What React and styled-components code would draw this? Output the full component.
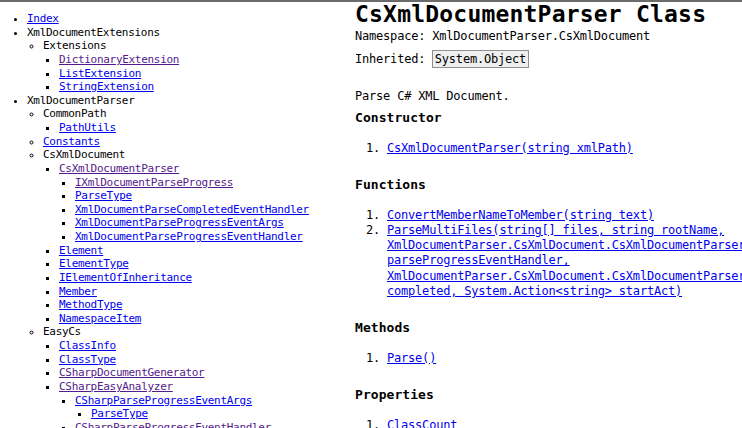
/* React */
import React from 'react';

/* Styles */
import styled, { createGlobalStyle } from 'styled-components';

/* Global */
const GlobalStyle = createGlobalStyle`
    html, body {
        margin: 0;
        padding: 0;
        overflow: hidden;
        background: #fff;
    }

    body {
        font-family: "DejaVu Sans Mono", "Liberation Mono", monospace;
        color: #000;
    }
`;

/* Data */
const tree = [
    { label: 'Index', link: true },
    {
        label: 'XmlDocumentExtensions',
        children: [
            {
                label: 'Extensions',
                children: [
                    { label: 'DictionaryExtension', link: true, visited: true },
                    { label: 'ListExtension', link: true },
                    { label: 'StringExtension', link: true },
                ],
            },
        ],
    },
    {
        label: 'XmlDocumentParser',
        children: [
            { label: 'CommonPath', children: [{ label: 'PathUtils', link: true }] },
            { label: 'Constants', link: true },
            {
                label: 'CsXmlDocument',
                children: [
                    {
                        label: 'CsXmlDocumentParser',
                        link: true,
                        visited: true,
                        children: [
                            { label: 'IXmlDocumentParseProgress', link: true, visited: true },
                            { label: 'ParseType', link: true },
                            { label: 'XmlDocumentParseCompletedEventHandler', link: true },
                            { label: 'XmlDocumentParseProgressEventArgs', link: true },
                            { label: 'XmlDocumentParseProgressEventHandler', link: true },
                        ],
                    },
                    { label: 'Element', link: true },
                    { label: 'ElementType', link: true },
                    { label: 'IElementOfInheritance', link: true },
                    { label: 'Member', link: true },
                    { label: 'MethodType', link: true },
                    { label: 'NamespaceItem', link: true },
                ],
            },
            {
                label: 'EasyCs',
                children: [
                    { label: 'ClassInfo', link: true },
                    { label: 'ClassType', link: true },
                    { label: 'CSharpDocumentGenerator', link: true, visited: true },
                    {
                        label: 'CSharpEasyAnalyzer',
                        link: true,
                        visited: true,
                        children: [
                            {
                                label: 'CSharpParseProgressEventArgs',
                                link: true,
                                children: [{ label: 'ParseType', link: true }],
                            },
                            { label: 'CSharpParseProgressEventHandler', link: true, visited: true },
                        ],
                    },
                ],
            },
        ],
    },
];

const sections = [
    {
        title: 'Constructor',
        items: ['CsXmlDocumentParser(string xmlPath)'],
    },
    {
        title: 'Functions',
        items: [
            'ConvertMemberNameToMember(string text)',
            'ParseMultiFiles(string[] files, string rootName, XmlDocumentParser.CsXmlDocument.CsXmlDocumentParser.ParseProgressEventHandler parseProgressEventHandler, XmlDocumentParser.CsXmlDocument.CsXmlDocumentParser.ParseCompletedEventHandler completed, System.Action<string> startAct)',
        ],
    },
    {
        title: 'Methods',
        items: ['Parse()'],
    },
    {
        title: 'Properties',
        items: ['ClassCount', 'ClassInfos', 'ProgressCount'],
    },
];

const bulletTypes = ['disc', 'circle', 'square'];

/* Styled Components */
const Page = styled.div`
    display: grid;
    grid-template-columns: 355px 1fr;
    height: 428px;
    border-top: 2px solid #6b6b6b;
    box-sizing: border-box;
`;

const Sidebar = styled.nav`
    padding: 10px 0 0 11px;
`;

const TreeList = styled.ul`
    margin: 0;
    padding-left: 16px;
    list-style-type: ${props => bulletTypes[Math.min(props.level, 2)]};
    font-size: 11px;
    line-height: 13.63px;
    letter-spacing: -0.3px;
`;

const TreeItem = styled.li`
    white-space: nowrap;
`;

const Link = styled.a`
    color: ${props => props.visited ? '#551a8b' : '#0000ee'};
    text-decoration: underline;
`;

const Main = styled.main`
    padding-right: 10px;
    min-width: 0;
`;

const Title = styled.h1`
    margin: 0;
    font-size: 23px;
    line-height: 24px;
    font-weight: bold;
    letter-spacing: 0.2px;
    white-space: nowrap;
`;

const InfoLine = styled.div`
    display: flex;
    align-items: center;
    height: ${props => props.tall ? '18px' : '15px'};
    margin-top: ${props => props.gap}px;
    font-size: 12px;
    line-height: 15px;
    letter-spacing: -0.2px;
    white-space: pre;
`;

const TypeBox = styled.span`
    display: inline-block;
    padding: 0 1.5px;
    border: 1px solid #8f8f8f;
    background: #efefef;
    line-height: 16px;
`;

const Description = styled.p`
    margin: 20.5px 0 0;
    font-size: 12px;
    line-height: 15.3px;
    letter-spacing: -0.2px;
`;

const Sections = styled.div`
    display: flex;
    flex-direction: column;
    gap: 21px;
    margin-top: 6.5px;
`;

const SectionTitle = styled.h3`
    margin: 0 0 14.5px;
    font-size: 13px;
    line-height: 16px;
    font-weight: bold;
    letter-spacing: 0.05px;
`;

const MemberList = styled.ol`
    margin: 0;
    padding-left: 32px;
    font-size: 12px;
    line-height: 15.3px;
    letter-spacing: -0.2px;
`;

const MemberLink = styled.a`
    color: #0000ee;
    text-decoration: underline;
`;

const Tree = ({ nodes, level }) => (
    <TreeList level={level}>
        {nodes.map(node => (
            <TreeItem key={node.label + level}>
                {node.link
                    ? <Link href="#" visited={node.visited ? 1 : 0}>{node.label}</Link>
                    : node.label}
                {node.children && <Tree nodes={node.children} level={level + 1} />}
            </TreeItem>
        ))}
    </TreeList>
);

const App = () => (
    <>
        <GlobalStyle />
        <Page>
            <Sidebar>
                <Tree nodes={tree} level={0} />
            </Sidebar>
            <Main>
                <Title>CsXmlDocumentParser Class</Title>
                <InfoLine gap={2.5}>Namespace: XmlDocumentParser.CsXmlDocument</InfoLine>
                <InfoLine gap={6.5} tall>
                    {'Inherited: '}
                    <TypeBox>System.Object</TypeBox>
                </InfoLine>
                <Description>Parse C# XML Document.</Description>
                <Sections>
                    {sections.map(section => (
                        <section key={section.title}>
                            <SectionTitle>{section.title}</SectionTitle>
                            <MemberList>
                                {section.items.map(item => (
                                    <li key={item}>
                                        <MemberLink href="#">{item}</MemberLink>
                                    </li>
                                ))}
                            </MemberList>
                        </section>
                    ))}
                </Sections>
            </Main>
        </Page>
    </>
);

export default App;
